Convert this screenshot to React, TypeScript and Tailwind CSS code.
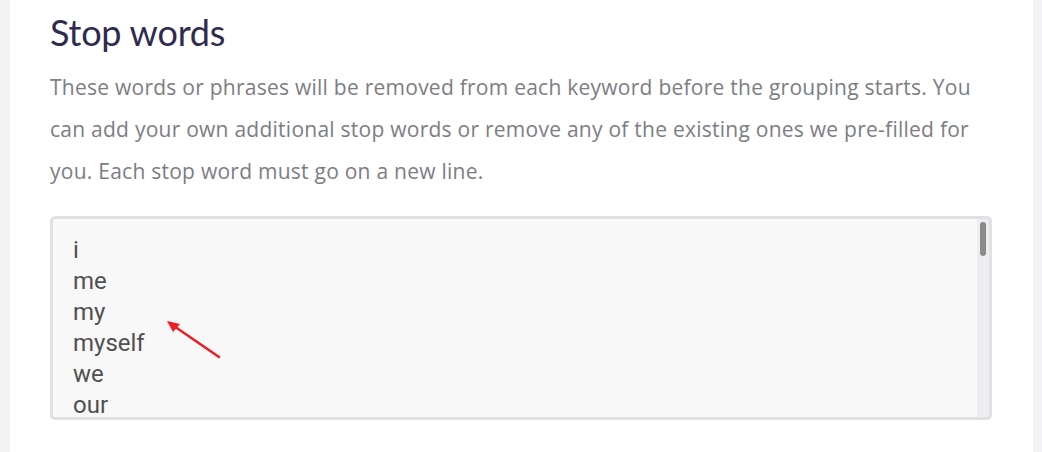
const stopWords = ["i", "me", "my", "myself", "we", "our", "ours"];

export default function App() {
  return (
    <div className="flex h-[452px] w-full bg-[#f3f3f5] overflow-hidden">
      <div className="ml-[10px] w-[1023px] bg-white pl-[40px] pr-[41px] pt-[10px]">
        <h2 className="text-[36px] leading-[44px] tracking-[-0.2px] text-[#2e2b4f] font-['Lato',sans-serif]">Stop words</h2>
        <p className="mt-[12px] whitespace-nowrap text-[21px] leading-[42px] tracking-[0.25px] text-[#7d7d84] font-['Open_Sans',sans-serif]">
          These words or phrases will be removed from each keyword before the grouping starts. You
          <br />
          can add your own additional stop words or remove any of the existing ones we pre-filled for
          <br />
          you. Each stop word must go on a new line.
        </p>
        <div className="relative mt-[24px] flex h-[204px] rounded-[5px] border-[3px] border-[#e1e1e5] bg-[#f8f8f8]">
          <div className="flex-1 overflow-hidden pl-[20px] pt-[16px] font-['Roboto',sans-serif] text-[24px] leading-[31px] text-[#505050]">
            {stopWords.map((w) => (
              <div key={w}>{w}</div>
            ))}
          </div>
          <div className="w-[12px] bg-[#eeeef0] pt-[3px] flex justify-center">
            <div className="h-[34px] w-[6px] rounded-full bg-[#8a8a8a]" />
          </div>
          {/* annotation arrow */}
          <svg className="absolute left-[110px] top-[97px]" width="60" height="45" viewBox="0 0 60 45">
            <line x1="56" y1="41" x2="8" y2="8" stroke="#ee1c25" strokeWidth="2.5" strokeLinecap="round" />
            <path d="M4 5 L17 8 L10 16 Z" fill="#ee1c25" />
          </svg>
        </div>
      </div>
    </div>
  );
}
